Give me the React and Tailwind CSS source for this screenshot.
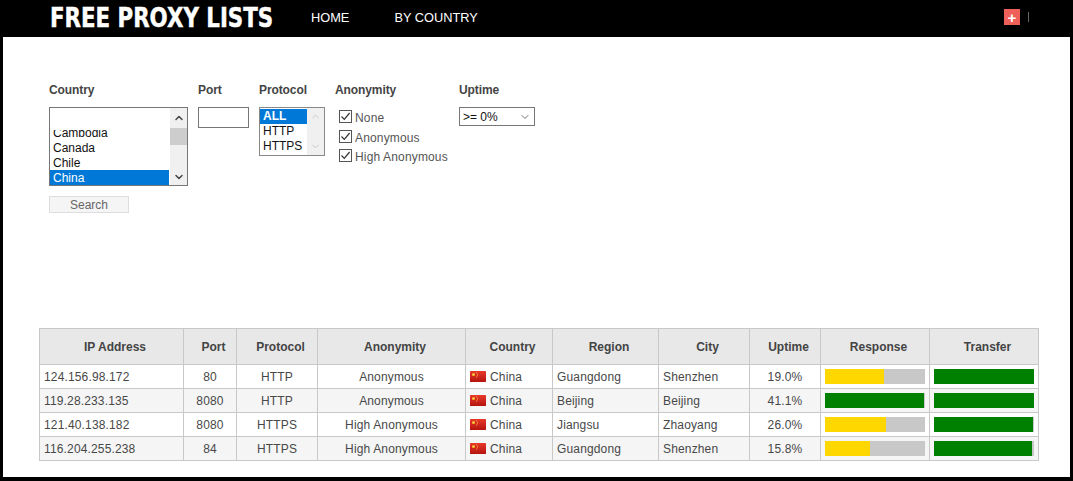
import React from "react";
import { ChevronUp, ChevronDown } from "lucide-react";

const rows = [
  ["124.156.98.172", "80", "HTTP", "Anonymous", "Guangdong", "Shenzhen", "19.0%", 59, "#ffd700", 100],
  ["119.28.233.135", "8080", "HTTP", "Anonymous", "Beijing", "Beijing", "41.1%", 99, "#008000", 100],
  ["121.40.138.182", "8080", "HTTPS", "High Anonymous", "Jiangsu", "Zhaoyang", "26.0%", 61, "#ffd700", 99],
  ["116.204.255.238", "84", "HTTPS", "High Anonymous", "Guangdong", "Shenzhen", "15.8%", 45, "#ffd700", 98],
];
const heads = ["IP Address", "Port", "Protocol", "Anonymity", "Country", "Region", "City", "Uptime", "Response", "Transfer"];
const widths = [144, 53, 81, 148, 87, 106, 91, 71, 109, 109];

function Flag() {
  return (
    <svg width="16" height="11" viewBox="0 0 16 11" className="shrink-0">
      <defs>
        <linearGradient id="cn" x1="0" y1="0" x2="0" y2="1">
          <stop offset="0" stopColor="#e8392b" />
          <stop offset="1" stopColor="#b5140f" />
        </linearGradient>
      </defs>
      <rect width="16" height="11" fill="url(#cn)" rx="0.5" />
      <circle cx="3.5" cy="3.5" r="1.5" fill="#f5c33b" />
      <circle cx="6.5" cy="1.8" r="0.5" fill="#f5c33b" />
      <circle cx="7.5" cy="3.2" r="0.5" fill="#f5c33b" />
      <circle cx="7.5" cy="4.8" r="0.5" fill="#f5c33b" />
      <circle cx="6.5" cy="6" r="0.5" fill="#f5c33b" />
    </svg>
  );
}

function Bar({ pct, color }) {
  return (
    <div className="h-[15px] w-[100px] bg-[#c8c8c8]">
      <div className="h-full" style={{ width: `${pct}%`, backgroundColor: color }} />
    </div>
  );
}

function Check({ label, className }) {
  return (
    <div className={`flex items-center ${className}`}>
      <span className="-mt-[2px] flex h-[13px] w-[13px] items-center justify-center border border-[#555] bg-white">
        <svg width="11" height="11" viewBox="0 0 11 11" fill="none" stroke="#333" strokeWidth="1.2">
          <path d="M1.5 5.5 L4.3 8.3 L9.6 2" />
        </svg>
      </span>
      <span className="ml-[3px] translate-y-px tracking-[0.15px] text-[#555]">{label}</span>
    </div>
  );
}

const label = "h-[14px] pt-px text-[12px] leading-[14px] font-bold tracking-[-0.1px] text-[#444]";

export default function App() {
  return (
    <div className="h-[481px] w-[1073px] overflow-hidden bg-black pr-[3px] pb-1 pl-[3px] font-['Liberation_Sans',Arial,sans-serif]">
      <header className="flex h-[37px] items-center pl-[47px] text-white">
        <div className="-mt-[2px] w-[261px]">
          <div className="origin-left scale-x-[0.79] font-['DejaVu_Sans',sans-serif] text-[27px] leading-[34px] font-bold whitespace-nowrap [-webkit-text-stroke:0.5px_white]">
            FREE PROXY LISTS
          </div>
        </div>
        <nav className="flex items-center gap-[45px] text-[12.8px] leading-none">
          <span>HOME</span>
          <span>BY COUNTRY</span>
        </nav>
        <div className="mr-[41px] -mt-[3px] ml-auto flex items-center gap-[8px]">
          <span className="flex h-[16px] w-[16px] items-center justify-center bg-[#f0605a] text-[15px] leading-none font-bold text-white">
            +
          </span>
          <span className="h-[10px] w-px bg-[#666]" />
        </div>
      </header>

      <main className="h-[440px] bg-white pt-[45px]">
        <section className="flex h-[246px] items-start pl-[46px]">
          <div className="w-[149px]">
            <div className={label}>Country</div>
            <div className="mt-[11px] flex h-[79px] w-[139px] border border-[#777] bg-white text-[12px] leading-[17px] text-[#111]">
              <div className="flex w-[120px] flex-col justify-end">
                <div className="h-[10px] overflow-hidden pl-[3px]">
                  <div className="-mt-[5px]">Cambodia</div>
                </div>
                <div className="h-[15px] pl-[3px]">Canada</div>
                <div className="h-[15px] pl-[3px]">Chile</div>
                <div className="h-[15px] bg-[#0078d7] pl-[3px] text-white">China</div>
              </div>
              <div className="ml-px flex w-[17px] flex-col bg-[#f0f0f0]">
                <div className="flex h-[20px] items-center justify-center">
                  <ChevronUp size={12} strokeWidth={3} color="#444" />
                </div>
                <div className="h-[17px] bg-[#cdcdcd]" />
                <div className="flex-1" />
                <div className="flex h-[17px] items-center justify-center">
                  <ChevronDown size={12} strokeWidth={3} color="#444" />
                </div>
              </div>
            </div>
            <button className="mt-[10px] block h-[17px] w-[80px] border border-[#ddd] bg-[#f5f5f5] pt-px text-[12px] leading-[15px] text-[#666]">
              Search
            </button>
          </div>

          <div className="w-[61px]">
            <div className={label}>Port</div>
            <div className="mt-[11px] h-[21px] w-[51px] border border-[#777] bg-white" />
          </div>

          <div className="w-[76px]">
            <div className={label}>Protocol</div>
            <div className="mt-[11px] flex h-[49px] w-[66px] border border-[#888] bg-white pt-px text-[12px] leading-[15px] text-[#111]">
              <div className="w-[47px]">
                <div className="bg-[#0078d7] pl-[3px] font-bold text-white">ALL</div>
                <div className="pl-[3px]">HTTP</div>
                <div className="pl-[3px]">HTTPS</div>
              </div>
              <div className="-mt-px flex w-[17px] flex-col items-center justify-between bg-[#f0f0f0] py-[3px]">
                <ChevronUp size={11} strokeWidth={2} color="#c4c4c4" />
                <ChevronDown size={11} strokeWidth={2} color="#c4c4c4" />
              </div>
            </div>
          </div>

          <div className="w-[124px]">
            <div className={label}>Anonymity</div>
            <div className="mt-[14px] pl-[4px] text-[12px] leading-[14px]">
              <Check label="None" />
              <Check label="Anonymous" className="mt-[6px]" />
              <Check label="High Anonymous" className="mt-[5px]" />
            </div>
          </div>

          <div>
            <div className={label}>Uptime</div>
            <div className="mt-[11px] flex h-[19px] w-[76px] items-center justify-between border border-[#777] bg-white pr-[3px] pl-[3px] text-[12px] text-[#111]">
              <span>&gt;= 0%</span>
              <ChevronDown size={12} strokeWidth={1.5} color="#444" />
            </div>
          </div>
        </section>

        <div className="pl-[36px]">
          <table className="w-[999px] table-fixed border-collapse text-[12px] tracking-[0.15px] text-[#484848]">
            <colgroup>
              {widths.map((w, i) => (
                <col key={i} style={{ width: w }} />
              ))}
            </colgroup>
            <thead>
              <tr className="h-[36px] bg-[#e8e8e8]">
                {heads.map((h) => (
                  <th key={h} className="border border-[#c8c8c8] py-0 pr-0 pl-[7px] text-center font-bold tracking-normal text-[#444]">
                    {h}
                  </th>
                ))}
              </tr>
            </thead>
            <tbody>
              {rows.map((r, i) => (
                <tr key={r[0]} className={`h-[24px] ${i % 2 ? "bg-[#f5f5f5]" : "bg-white"}`}>
                  <td className="border border-[#c8c8c8] py-0 pr-0 pl-[4px]">{r[0]}</td>
                  <td className="border border-[#c8c8c8] p-0 text-center">{r[1]}</td>
                  <td className="border border-[#c8c8c8] p-0 text-center">{r[2]}</td>
                  <td className="border border-[#c8c8c8] p-0 text-center">{r[3]}</td>
                  <td className="border border-[#c8c8c8] py-0 pr-0 pl-[4px]">
                    <div className="flex items-center gap-[4px]">
                      <Flag />
                      <span>China</span>
                    </div>
                  </td>
                  <td className="border border-[#c8c8c8] py-0 pr-0 pl-[4px]">{r[4]}</td>
                  <td className="border border-[#c8c8c8] py-0 pr-0 pl-[4px]">{r[5]}</td>
                  <td className="border border-[#c8c8c8] p-0 text-center">{r[6]}</td>
                  <td className="border border-[#c8c8c8] py-0 pr-0 pl-[4px]">
                    <Bar pct={r[7]} color={r[8]} />
                  </td>
                  <td className="border border-[#c8c8c8] py-0 pr-0 pl-[4px]">
                    <Bar pct={r[9]} color="#008000" />
                  </td>
                </tr>
              ))}
            </tbody>
          </table>
        </div>
      </main>
    </div>
  );
}
